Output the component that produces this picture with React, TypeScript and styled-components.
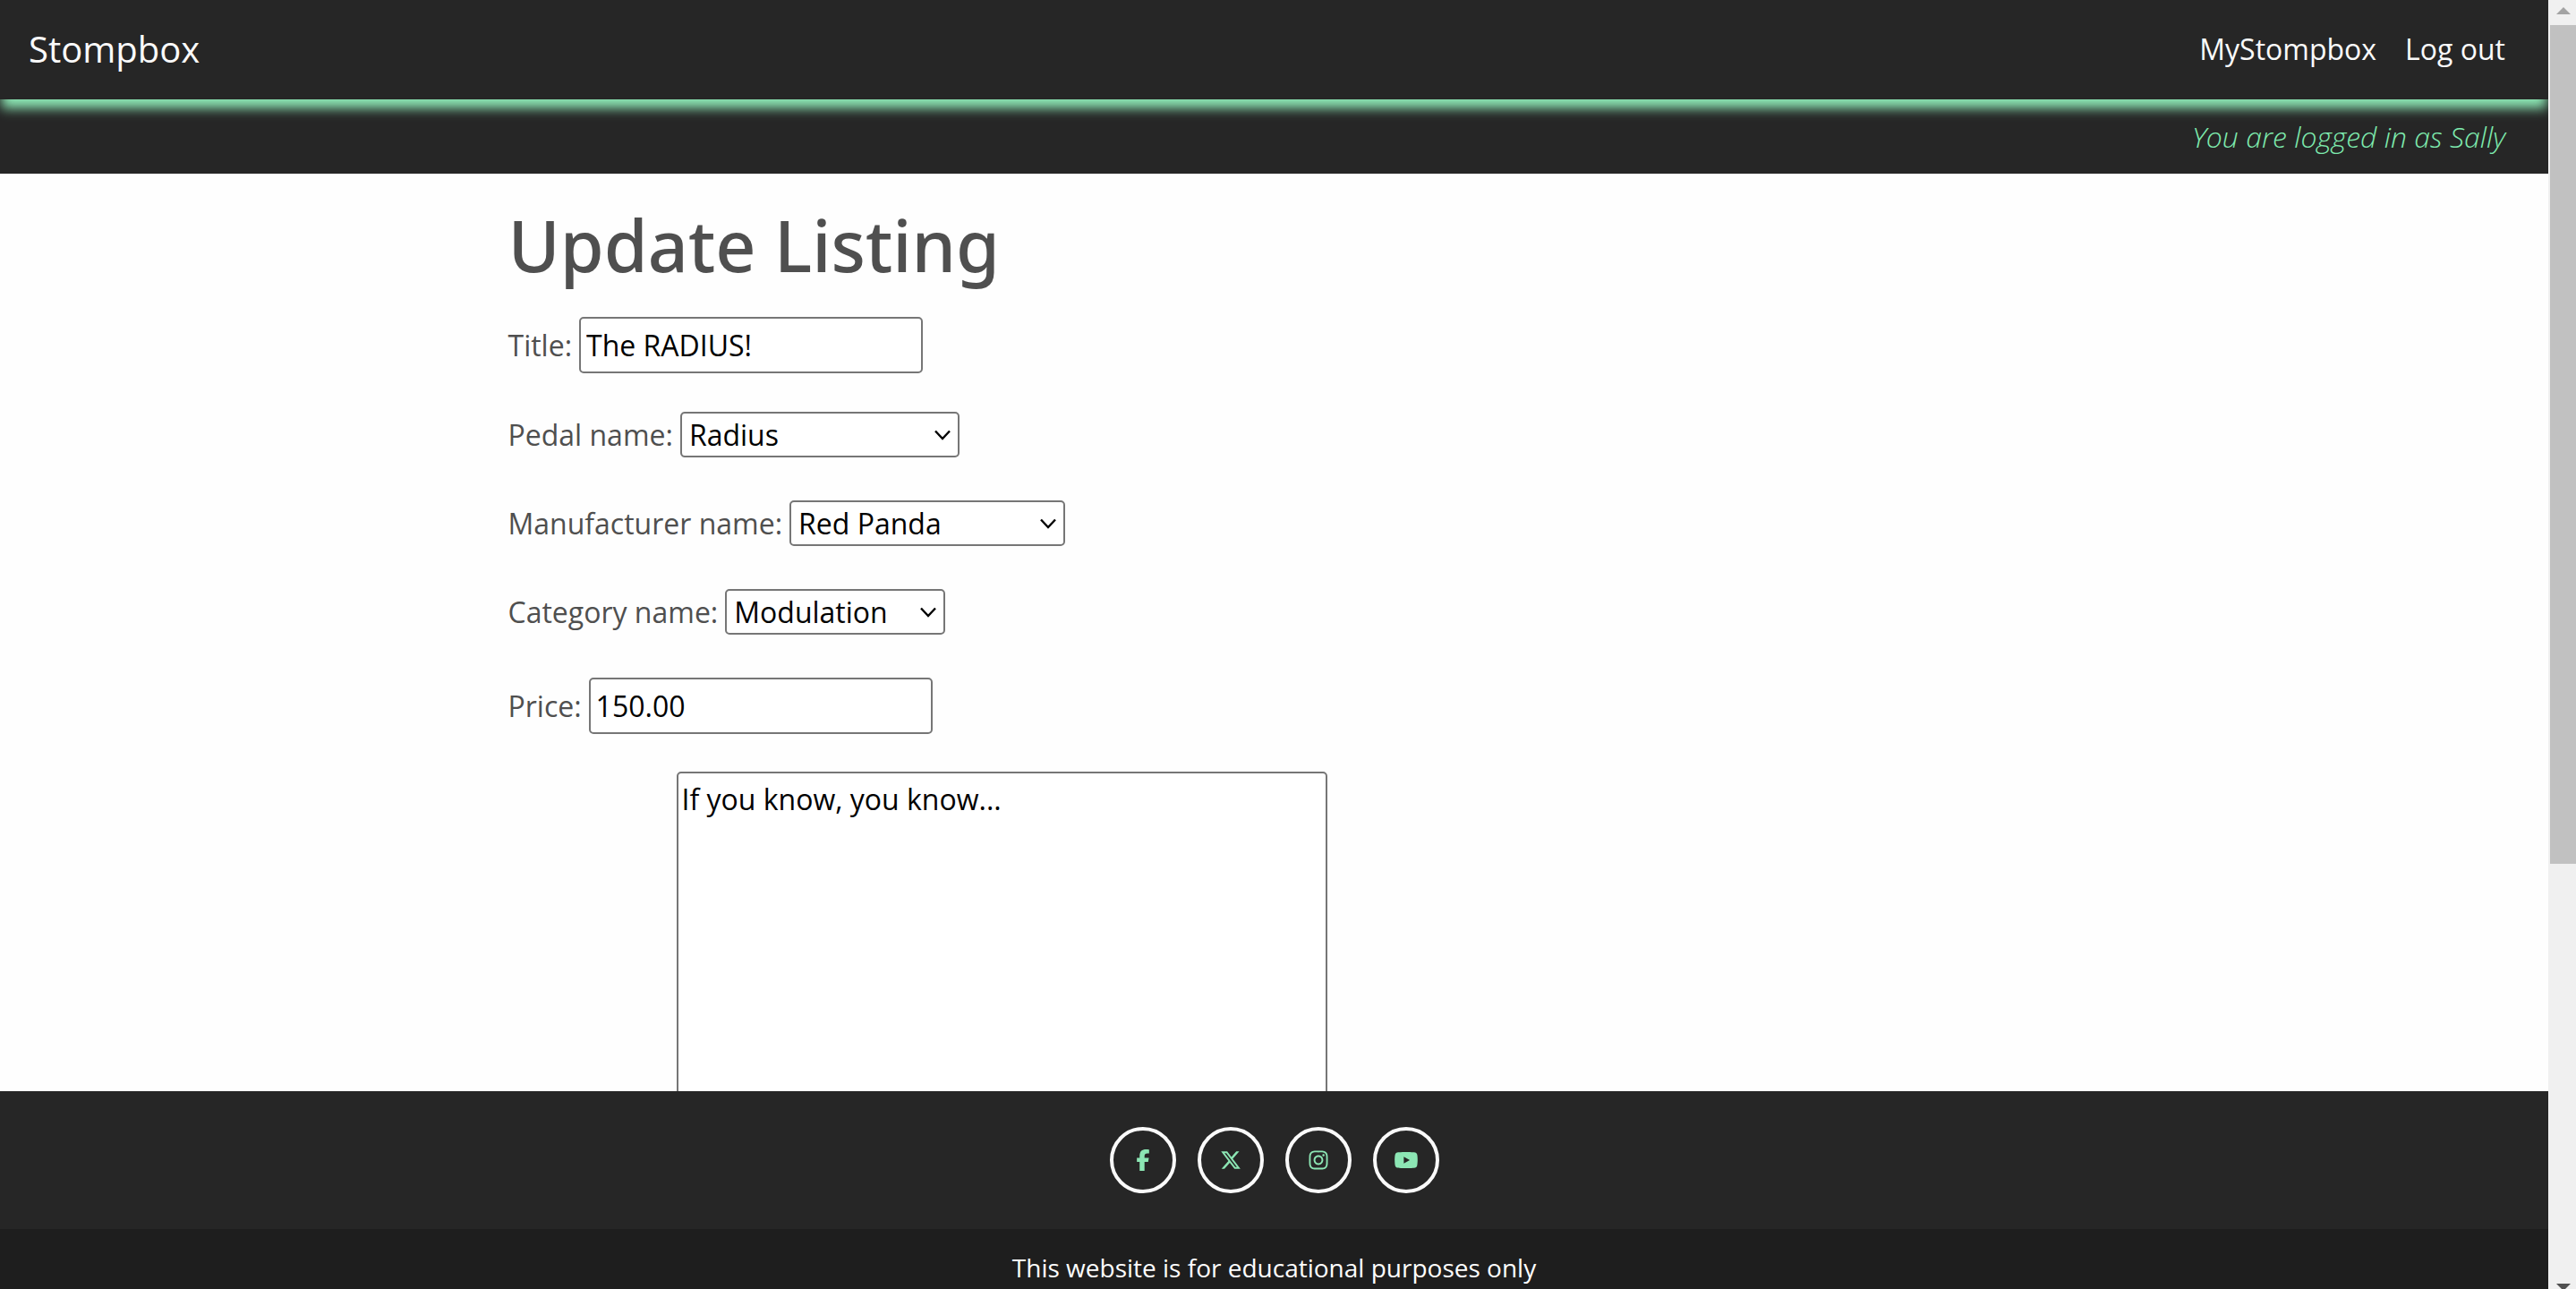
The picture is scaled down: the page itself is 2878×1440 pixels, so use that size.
import React from "react";
import styled, { createGlobalStyle } from "styled-components";
import { FaFacebookF, FaInstagram, FaXTwitter, FaYoutube } from "react-icons/fa6";

const GlobalStyle = createGlobalStyle`
  *, *::before, *::after { box-sizing: border-box; }
  body {
    margin: 0;
    background: #fefefe;
    color: #4f4f4f;
    font-family: "Open Sans", "Noto Sans", sans-serif;
    font-size: 32px;
    line-height: 48px;
  }
`;

const Window = styled.div`
  display: grid;
  grid-template-columns: minmax(0, 1fr) 31px;
  height: 100vh;
  overflow: hidden;
`;

const Page = styled.div`
  display: flex;
  flex-direction: column;
  min-height: 0;
`;

const Header = styled.header`
  position: relative;
  display: flex;
  flex: none;
  align-items: center;
  justify-content: space-between;
  height: 111px;
  padding: 0 48px 2px 32px;
  background: #262626;
  box-shadow: 0 12px 12px -2px #8ce6b4;
  clip-path: inset(0 0 -32px 0);
`;

const Brand = styled.a`
  color: #fafafa;
  font-size: 40px;
  line-height: 60px;
  text-decoration: none;
`;

const Nav = styled.nav`
  display: flex;
  gap: 32px;
`;

const NavLink = styled.a`
  color: #fafafa;
  text-decoration: none;
`;

const StatusBar = styled.p`
  flex: none;
  margin: 0;
  padding: 18px 48px 17px;
  background: #262626;
  color: #7eeaae;
  font-style: italic;
  font-weight: 300;
  text-align: right;
`;

const Main = styled.main`
  flex: 1;
  min-height: 0;
  overflow: hidden;
  padding: 32px 20px 0 calc(50% - 856px);
`;

const Heading = styled.h1`
  margin: 0;
  font-family: "Noto Sans", "Open Sans", sans-serif;
  font-size: 79px;
  font-weight: 500;
  line-height: 96px;
`;

const Form = styled.form`
  padding-top: 32px;
`;

const Field = styled.div<{ $gap: number }>`
  display: flex;
  align-items: baseline;
  gap: 8px;
  margin-bottom: ${(p) => p.$gap}px;
`;

const Label = styled.label`
  flex: none;
`;

const TextInput = styled.input`
  width: 384px;
  height: 63px;
  padding: 2px 6px;
  border: 2px solid #767676;
  border-radius: 5px;
  background: #fff;
  color: #000;
  font: inherit;
`;

const SelectBox = styled.span<{ $width: number }>`
  display: grid;
  grid-template-columns: 1fr 20px;
  align-items: center;
  width: ${(p) => p.$width}px;
  height: 51px;
  padding-right: 7px;
  border: 2px solid #767676;
  border-radius: 5px;
  background: #fff;
`;

const Select = styled.select`
  grid-area: 1 / 1 / 2 / 3;
  width: 100%;
  height: 47px;
  padding: 1px 28px 0 8px;
  border: 0;
  appearance: none;
  background: transparent;
  color: #000;
  font: inherit;
  line-height: 46px;
`;

const Chevron = styled.svg`
  grid-area: 1 / 2;
  width: 20px;
  height: 12px;
  pointer-events: none;
`;

const TextArea = styled.textarea`
  width: 727px;
  height: 496px;
  margin-left: 188px;
  padding: 5px 4px;
  border: 2px solid #767676;
  border-radius: 5px;
  background: #fff;
  color: #000;
  font: inherit;
  resize: none;
`;

const Footer = styled.footer`
  flex: none;
  background: #262626;
`;

const Socials = styled.ul`
  display: flex;
  justify-content: center;
  gap: 24px;
  margin: 0;
  padding: 40px 0;
  list-style: none;
`;

const SocialLink = styled.a`
  display: flex;
  align-items: center;
  justify-content: center;
  width: 74px;
  height: 74px;
  border: 4px solid #fafafa;
  border-radius: 50%;
  color: #8ce6b4;

  svg {
    width: 30px;
    height: 24px;
  }
`;

const Notice = styled.p`
  height: 67px;
  margin: 0;
  padding-top: 22px;
  background: #1e1e1e;
  color: #fff;
  font-size: 28px;
  line-height: 42px;
  text-align: center;
`;

const ScrollTrack = styled.div`
  display: flex;
  flex-direction: column;
  min-height: 0;
  padding-left: 2px;
  background: #f0f0f0;
`;

const ScrollButton = styled.button<{ $height: number; $color: string }>`
  display: flex;
  flex: none;
  justify-content: center;
  height: ${(p) => p.$height}px;
  padding: 8px 0 0;
  border: 0;
  background: none;
  color: ${(p) => p.$color};
  overflow: hidden;

  svg {
    flex: none;
    width: 16px;
    height: 8px;
  }
`;

const ScrollThumb = styled.div`
  flex: 937;
  background: #c1c1c1;
`;

const ScrollRest = styled.div`
  flex: 461;
`;

type Option = { id: string; label: string; value: string; width: number };

const selects: Option[] = [
  { id: "pedal", label: "Pedal name:", value: "Radius", width: 312 },
  { id: "manufacturer", label: "Manufacturer name:", value: "Red Panda", width: 308 },
  { id: "category", label: "Category name:", value: "Modulation", width: 246 },
];

const socials = [
  { name: "Facebook", Icon: FaFacebookF },
  { name: "X", Icon: FaXTwitter },
  { name: "Instagram", Icon: FaInstagram },
  { name: "YouTube", Icon: FaYoutube },
];

export default function App() {
  return (
    <>
      <GlobalStyle />
      <Window>
        <Page>
          <Header>
            <Brand href="#">Stompbox</Brand>
            <Nav>
              <NavLink href="#">MyStompbox</NavLink>
              <NavLink href="#">Log out</NavLink>
            </Nav>
          </Header>
          <StatusBar>You are logged in as Sally</StatusBar>
          <Main>
            <Heading>Update Listing</Heading>
            <Form>
              <Field $gap={43}>
                <Label htmlFor="title">Title:</Label>
                <TextInput id="title" defaultValue="The RADIUS!" />
              </Field>
              {selects.map((s) => (
                <Field key={s.id} $gap={48}>
                  <Label htmlFor={s.id}>{s.label}</Label>
                  <SelectBox $width={s.width}>
                    <Select id={s.id} defaultValue={s.value}>
                      <option>{s.value}</option>
                    </Select>
                    <Chevron viewBox="0 0 20 12" aria-hidden="true">
                      <path d="M2 1.5 L10 10 L18 1.5" fill="none" stroke="#000" strokeWidth="2.4" />
                    </Chevron>
                  </SelectBox>
                </Field>
              ))}
              <Field $gap={42}>
                <Label htmlFor="price">Price:</Label>
                <TextInput id="price" defaultValue="150.00" />
              </Field>
              <Field $gap={42}>
                <TextArea aria-label="Description" defaultValue="If you know, you know..." />
              </Field>
            </Form>
          </Main>
          <Footer>
            <Socials>
              {socials.map(({ name, Icon }) => (
                <li key={name}>
                  <SocialLink href="#" aria-label={name}>
                    <Icon />
                  </SocialLink>
                </li>
              ))}
            </Socials>
            <Notice>This website is for educational purposes only</Notice>
          </Footer>
        </Page>
        <ScrollTrack>
          <ScrollButton type="button" aria-label="Scroll up" $height={28} $color="#a3a3a3">
            <svg viewBox="0 0 16 8"><path d="M0 8 L8 0 L16 8 Z" fill="currentColor" /></svg>
          </ScrollButton>
          <ScrollThumb />
          <ScrollRest />
          <ScrollButton type="button" aria-label="Scroll down" $height={14} $color="#505050">
            <svg viewBox="0 0 16 8"><path d="M0 0 L8 8 L16 0 Z" fill="currentColor" /></svg>
          </ScrollButton>
        </ScrollTrack>
      </Window>
    </>
  );
}
